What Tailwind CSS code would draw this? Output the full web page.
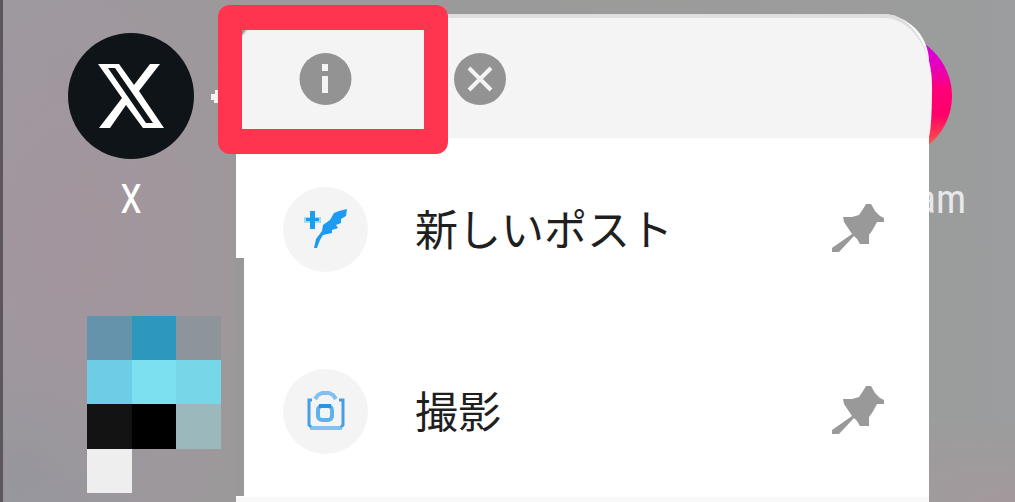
<!DOCTYPE html>
<html lang="ja">
<head>
<meta charset="utf-8">
<meta name="viewport" content="width=device-width, initial-scale=1">
<title>ホーム画面</title>
<script src="https://cdn.jsdelivr.net/npm/@tailwindcss/browser@4"></script>
</head>
<body class="font-['Roboto','Noto_Sans_CJK_JP',sans-serif]">
<main class="relative min-h-screen overflow-hidden border-l-3 border-[#5d565d] bg-[#9b9b9b] bg-[radial-gradient(ellipse_240px_380px_at_70px_240px,#a3959d_0%,#a3959d00_100%),radial-gradient(ellipse_150px_160px_at_20px_470px,#90979c_0%,#90979c00_100%),radial-gradient(ellipse_260px_90px_at_100%_100%,#a3999c_0%,#a3999c00_100%),linear-gradient(90deg,#9c9aa2_0%,#9b9999_25%,#9b9c9b_85%,#9b9d9e_100%)]">

  <!-- Home screen apps -->
  <section class="flex items-start justify-between pl-[65px] pr-[49px] pt-[33px]">
    <div class="flex flex-col items-center">
      <a href="#" aria-labelledby="x-name" class="flex size-[126px] items-center justify-center rounded-full bg-[#0f1419]">
        <svg class="size-[66px]" viewBox="0 0 66 66" aria-hidden="true">
          <path fill="#fff" fill-rule="evenodd" d="M0 1H21L36 22 52 1H62L41 28 66 65H45L28 42 12 65H1L24 35ZM10 5 48 60H55L17 5Z"/>
        </svg>
      </a>
      <span id="x-name" class="mt-5 text-[40px] leading-[42px] text-white font-['Liberation_Sans_Narrow','Roboto_Condensed','Open_Sans_Condensed','Roboto',sans-serif]">X</span>
    </div>
    <div class="flex flex-col items-end">
      <a href="#" aria-labelledby="insta-name" class="mr-[14px] block size-[126px] rounded-full bg-[linear-gradient(180deg,#c800f0_0%,#e600c0_25%,#ff0078_45%,#ff0068_65%,#ff4a4a_85%,#ff8030_100%)]"></a>
      <span id="insta-name" class="mt-5 text-[40px] leading-[42px] text-[#e8e8e8] font-['Liberation_Sans_Narrow','Roboto_Condensed','Open_Sans_Condensed','Roboto',sans-serif]">Instagram</span>
    </div>
  </section>

  <!-- Arrow tip peeking out beside the menu -->
  <svg class="absolute left-[207px] top-[90px] h-[13px] w-4" viewBox="0 0 16 13" aria-hidden="true"><path fill="#f2f2f2" d="M1 4h4V0h12v13H4V10H1z"/></svg>

  <!-- Pixelated app icon -->
  <div class="ml-[84px] mt-[95px] grid w-[134px] grid-cols-3" aria-hidden="true">
    <i class="h-11 bg-[#6593ab]"></i><i class="h-11 bg-[#2d97bd]"></i><i class="h-11 bg-[#8d959b]"></i>
    <i class="h-11 bg-[#6dcde7]"></i><i class="h-11 bg-[#7de0f0]"></i><i class="h-11 bg-[#75d7e8]"></i>
    <i class="h-[45px] bg-[#131313]"></i><i class="h-[45px] bg-black"></i><i class="h-[45px] bg-[#9bb8bd]"></i>
    <i class="h-11 bg-[#eeeeee]"></i>
  </div>

  <!-- Shortcut menu -->
  <div class="absolute bottom-0 left-[233px] right-[86px] top-[14px] flex flex-col rounded-tl-[44px] rounded-tr-[48px] bg-white">
    <div class="-mr-[3px] flex h-[124px] shrink-0 items-start rounded-tl-[44px] rounded-tr-[48px_72px] rounded-br-[4px_48px] border-t-4 border-[#dedede] bg-[#f4f4f4] pl-[63px] pt-[35px]">
      <button type="button" aria-label="アプリ情報" class="size-[53px]">
        <svg class="size-full" viewBox="0 0 53 53"><circle cx="26.5" cy="26" r="26" fill="#939393"/><path fill="#f4f4f4" d="M23 11h6v7h-6zM23 23h6v17h-6z"/></svg>
      </button>
      <button type="button" aria-label="閉じる" class="ml-[102px] size-[53px]">
        <svg class="size-full" viewBox="0 0 53 53"><circle cx="26" cy="26" r="26" fill="#939393"/><path stroke="#f4f4f4" stroke-width="4" d="M15 15 37 37M37 15 15 37"/></svg>
      </button>
    </div>
    <ul class="text-[43px] leading-[64px] text-[#1f1f1f]">
      <li class="flex h-[182px] items-center pl-[47px] pr-[44px]">
        <button type="button" class="flex flex-1 items-center gap-[47px] text-left">
          <span class="flex size-[85px] items-center justify-center rounded-full bg-[#f4f4f4]">
            <svg class="h-[42px] w-11" viewBox="0 0 44 42" aria-hidden="true"><path fill="#a9d6f6" d="M0 9h17v6H0z"/><path fill="#1d9bf0" d="M6 3h5v18H6zM2 10h13v3H2zM43 1 42 8 37 11 37 15 32 17 34 20 28 22 28 25 19 27 16 32 13 40H10L12 31 18 23 19 17 26 12 30 5 35 3Z"/></svg>
          </span>
          <span class="pt-1">新しいポスト</span>
        </button>
        <button type="button" aria-label="新しいポストをピン留め" class="size-[53px]">
          <svg class="size-full" viewBox="0 0 53 53"><path fill="#999" d="M34 1h5l4 7 5 5 4 2v4h-7l-5 9-3 4v9h-9l-3-5-3-3L7 49H0v-4L20 31l-4-6-4-6-1-5h9l7-2 4-6z"/></svg>
        </button>
      </li>
      <li class="flex h-[182px] items-center pl-[47px] pr-[44px]">
        <button type="button" class="flex flex-1 items-center gap-[47px] text-left">
          <span class="flex size-[85px] items-center justify-center rounded-full bg-[#f4f4f4]">
            <svg class="h-[42px] w-10" viewBox="0 0 40 42" fill="none" aria-hidden="true"><path stroke="#84c0ee" stroke-width="4" d="M9 9 12 5 16 3H23L27 5 30 9M4 38H36"/><path stroke="#469fe4" stroke-width="3" d="M6 10H3V35L5 37M33 10H37V35L35 37"/><rect x="12" y="16" width="14" height="14" rx="4" stroke="#5fb0eb" stroke-width="4"/><path stroke="#2e93dd" stroke-width="4" d="M13 16H25"/></svg>
          </span>
          <span class="pt-1">撮影</span>
        </button>
        <button type="button" aria-label="撮影をピン留め" class="size-[53px]">
          <svg class="size-full" viewBox="0 0 53 53"><path fill="#999" d="M34 1h5l4 7 5 5 4 2v4h-7l-5 9-3 4v9h-9l-3-5-3-3L7 49H0v-4L20 31l-4-6-4-6-1-5h9l7-2 4-6z"/></svg>
        </button>
      </li>
    </ul>
    <div class="-mt-[5px] h-[5px] bg-[#f8f8f8]"></div>
    <!-- Censored strip over the menu edge -->
    <div class="absolute bottom-[6px] left-0 top-[244px] w-2 bg-[#999898]"></div>
  </div>

  <!-- Highlight frame around the app info button -->
  <div class="absolute left-[215px] top-[5px] h-[149px] w-[230px] rounded-xl bg-[#ff344e] [clip-path:path(evenodd,'M0_0H230V149H0ZM24_25H206V124H24Z')]" aria-hidden="true"></div>
</main>
</body>
</html>
